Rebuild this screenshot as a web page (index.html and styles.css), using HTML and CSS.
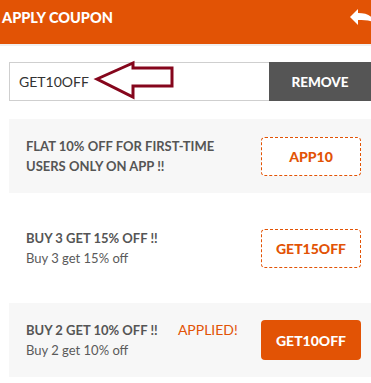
FILE: index.html
```html
<!DOCTYPE html>
<html>
<head>
<meta charset="utf-8">
<link rel="stylesheet" href="styles.css">
</head>
<body>
<header class="topbar">
  <span class="title">APPLY COUPON</span>
  <svg class="back" width="26" height="20" viewBox="0 0 26 20"><path d="M0 8 L8 0 L8 4 C17 4 23 7 26 15 C21 11 15 11 8 11 L8 16 Z" fill="#fff"/></svg>
</header>
<main class="content">
  <div class="apply-row">
    <div class="code-input">GET10OFF</div>
    <button class="remove-btn">REMOVE</button>
    <svg class="annot" width="86" height="42" viewBox="0 0 86 42"><path d="M7 19 L43 3 L43 8 L82 8 L82 26 L43 26 L43 37 Z" fill="none" stroke="#85061c" stroke-width="3" stroke-linejoin="miter"/></svg>
  </div>
  <div class="coupon shaded">
    <div class="info">
      <div class="head">FLAT 10% OFF FOR FIRST-TIME<br>USERS ONLY ON APP !!</div>
    </div>
    <div class="code dashed">APP10</div>
  </div>
  <div class="coupon">
    <div class="info">
      <div class="head">BUY 3 GET 15% OFF !!</div>
      <div class="sub">Buy 3 get 15% off</div>
    </div>
    <div class="code dashed">GET15OFF</div>
  </div>
  <div class="coupon shaded">
    <div class="info">
      <div class="head">BUY 2 GET 10% OFF !! <span class="applied">APPLIED!</span></div>
      <div class="sub">Buy 2 get 10% off</div>
    </div>
    <div class="code filled">GET10OFF</div>
  </div>
</main>
</body>
</html>
```
FILE: styles.css
```css
html, body { margin: 0; padding: 0; }
body {
  font-family: Lato, "Open Sans", sans-serif;
  background: #fff;
  overflow: hidden;
  width: 371px;
}
.topbar {
  height: 46px;
  background: #e25305;
  border-bottom: 2px solid #f0f0f0;
  display: flex;
  align-items: center;
  padding-left: 2px;
  padding-bottom: 10px;
  box-sizing: border-box;
  position: relative;
}
.title {
  color: #fff;
  font-weight: 900;
  font-size: 14.5px;
}
.back { position: absolute; left: 350px; top: 9px; }
.content { margin-left: 9px; padding-top: 16px; }
.apply-row {
  display: flex;
  height: 39px;
  position: relative;
  margin-bottom: 18px;
}
.code-input {
  width: 260px;
  box-sizing: border-box;
  border: 1px solid #cfcfcf;
  border-right: none;
  padding-left: 9px;
  display: flex;
  align-items: center;
  font-size: 14px;
  color: #333;
}
.remove-btn {
  width: 102px;
  border: none;
  background: #555;
  color: #fff;
  font-family: inherit;
  font-weight: 900;
  font-size: 13.5px;
  padding: 0;
}
.annot { position: absolute; left: 81px; top: -2px; }
.coupon {
  height: 74px;
  display: flex;
  align-items: center;
  justify-content: space-between;
  padding: 0 10px 0 17px;
  margin-bottom: 18px;
  box-sizing: border-box;
}
.shaded { background: #f7f7f7; }
.head {
  font-weight: 700;
  font-size: 13px;
  color: #555;
  line-height: 20px;
}
.sub {
  font-size: 13px;
  color: #5a5a5a;
  line-height: 21px;
}
.applied {
  color: #e25305;
  font-weight: 400;
  font-size: 14px;
  margin-left: 17px;
}
.code {
  width: 100px;
  height: 39px;
  box-sizing: border-box;
  border-radius: 4px;
  display: flex;
  align-items: center;
  justify-content: center;
  font-weight: 900;
  font-size: 14px;
}
.dashed {
  border: 1px dashed #e25305;
  background: #fff;
  color: #e25305;
}
.filled {
  background: #e25305;
  color: #fff;
  height: 40px;
}
```
